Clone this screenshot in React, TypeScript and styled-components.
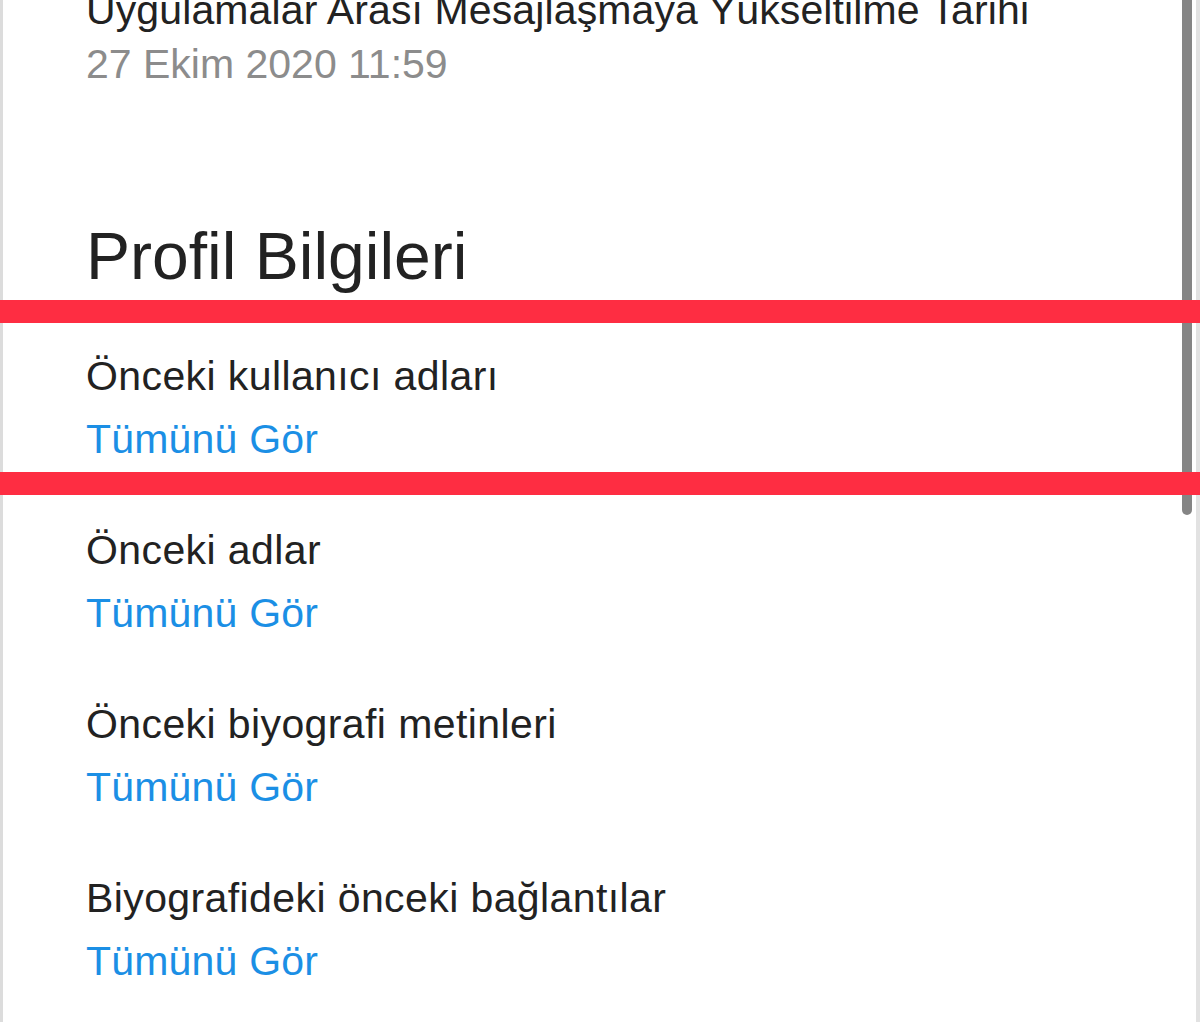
import React from "react";
import styled, { createGlobalStyle } from "styled-components";

const Global = createGlobalStyle`
  html, body { margin: 0; padding: 0; background: #ffffff; }
  body { font-family: "Liberation Sans", Arial, sans-serif; overflow: hidden; }
`;

const Page = styled.div`
  position: relative;
  width: 1200px;
  height: 1022px;
  overflow: hidden;
  background: #ffffff;
`;

const Frame = styled.main`
  box-sizing: border-box;
  height: 100%;
  border-left: 3px solid #dcdcdc;
  border-right: 4px solid #e2e2e2;
  padding-left: 83px;
  display: flex;
  flex-direction: column;
`;

const Header = styled.section`
  display: flex;
  flex-direction: column;
  margin-top: -17px;
`;

const InfoTitle = styled.div`
  font-size: 41px;
  line-height: 54px;
  letter-spacing: 0.12px;
  color: #222222;
  white-space: nowrap;
`;

const InfoValue = styled.div`
  font-size: 41px;
  line-height: 54px;
  color: #8c8c8c;
`;

const SectionTitle = styled.h1`
  margin: 125px 0 0;
  font-size: 66px;
  line-height: 80px;
  font-weight: 400;
  color: #222222;
`;

const List = styled.div`
  margin-top: 49px;
  display: flex;
  flex-direction: column;
  gap: 48px;
`;

const Item = styled.div`
  display: flex;
  flex-direction: column;
`;

const Label = styled.div`
  font-size: 41px;
  line-height: 63px;
  letter-spacing: 0.4px;
  color: #222222;
`;

const SeeAll = styled.a`
  font-size: 41px;
  line-height: 63px;
  letter-spacing: 0.2px;
  color: #1b8fe5;
  text-decoration: none;
  cursor: pointer;
`;

const Scrollbar = styled.div`
  position: absolute;
  left: 1182px;
  top: -20px;
  width: 10px;
  height: 535px;
  border-radius: 5px;
  background: #858585;
`;

const Highlight = styled.div<{ $top: number }>`
  position: absolute;
  left: 0;
  right: 0;
  top: ${(p) => p.$top}px;
  height: 23px;
  background: #fe2d42;
`;

const items = [
  "Önceki kullanıcı adları",
  "Önceki adlar",
  "Önceki biyografi metinleri",
  "Biyografideki önceki bağlantılar",
];

export default function App() {
  return (
    <>
      <Global />
      <Page>
        <Frame>
          <Header>
            <InfoTitle>Uygulamalar Arası Mesajlaşmaya Yükseltilme Tarihi</InfoTitle>
            <InfoValue>27 Ekim 2020 11:59</InfoValue>
          </Header>
          <SectionTitle>Profil Bilgileri</SectionTitle>
          <List>
            {items.map((t) => (
              <Item key={t}>
                <Label>{t}</Label>
                <SeeAll>Tümünü Gör</SeeAll>
              </Item>
            ))}
          </List>
        </Frame>
        <Scrollbar />
        <Highlight $top={300} />
        <Highlight $top={472} />
      </Page>
    </>
  );
}
